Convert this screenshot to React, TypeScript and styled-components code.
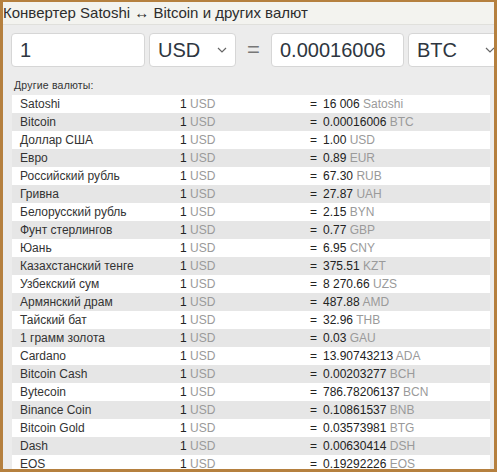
import * as React from 'react'
import styled, { createGlobalStyle } from 'styled-components'

const GlobalStyle = createGlobalStyle`
  html, body {
    margin: 0;
    padding: 0;
    background: #ffffff;
  }
`

const Frame = styled.div`
  box-sizing: border-box;
  width: 497px;
  height: 472px;
  overflow: hidden;
  border: 3px solid #b5803f;
  border-top-width: 2px;
  background: #ececec;
  font-family: 'Liberation Sans', Arial, sans-serif;
  color: #333333;
`

const Title = styled.div`
  height: 22px;
  line-height: 21px;
  font-size: 15px;
  color: #2d2d2d;
  background: #f3f3ef;
  border-bottom: 1px solid #e0e0dc;
  white-space: nowrap;
`

const Panel = styled.div`
  padding: 8px 0 0 8px;
`

const ConvertRow = styled.div`
  display: flex;
  align-items: center;
  width: 520px;
  gap: 4px;
`

const Field = styled.div<{ $width: number }>`
  box-sizing: border-box;
  flex: 0 0 ${p => p.$width}px;
  height: 34px;
  padding: 0 8px;
  display: flex;
  align-items: center;
  justify-content: space-between;
  background: #ffffff;
  border: 1px solid #d6d6d6;
  border-radius: 4px;
  font-size: 20px;
  color: #2e3640;
`

const Equals = styled.div`
  flex: 0 0 27px;
  text-align: center;
  font-size: 22px;
  color: #777777;
`

const Caption = styled.div`
  margin-top: 12px;
  padding-left: 3px;
  height: 16px;
  font-size: 10.5px;
  color: #333333;
  letter-spacing: 0.2px;
`

const Table = styled.div`
  width: 478px;
  margin-left: 1px;
`

const Row = styled.div<{ $odd: boolean }>`
  display: grid;
  grid-template-columns: 168px 130px 13px 1fr;
  height: 18px;
  line-height: 18px;
  font-size: 12px;
  background: ${p => (p.$odd ? '#e6e6e6' : '#ffffff')};
  white-space: nowrap;
`

const Name = styled.span`
  padding-left: 8px;
  color: #333333;
`

const Num = styled.span`
  color: #222222;
`

const Code = styled.span`
  color: #9a9a9a;
`

const Chevron = () => (
  <svg width='10' height='6' viewBox='0 0 10 6'>
    <path d='M1 1l4 4 4-4' fill='none' stroke='#666' strokeWidth='1.2' />
  </svg>
)

const rows: [string, string, string][] = [
  ['Satoshi', '16 006', 'Satoshi'],
  ['Bitcoin', '0.00016006', 'BTC'],
  ['Доллар США', '1.00', 'USD'],
  ['Евро', '0.89', 'EUR'],
  ['Российский рубль', '67.30', 'RUB'],
  ['Гривна', '27.87', 'UAH'],
  ['Белорусский рубль', '2.15', 'BYN'],
  ['Фунт стерлингов', '0.77', 'GBP'],
  ['Юань', '6.95', 'CNY'],
  ['Казахстанский тенге', '375.51', 'KZT'],
  ['Узбекский сум', '8 270.66', 'UZS'],
  ['Армянский драм', '487.88', 'AMD'],
  ['Тайский бат', '32.96', 'THB'],
  ['1 грамм золота', '0.03', 'GAU'],
  ['Cardano', '13.90743213', 'ADA'],
  ['Bitcoin Cash', '0.00203277', 'BCH'],
  ['Bytecoin', '786.78206137', 'BCN'],
  ['Binance Coin', '0.10861537', 'BNB'],
  ['Bitcoin Gold', '0.03573981', 'BTG'],
  ['Dash', '0.00630414', 'DSH'],
  ['EOS', '0.19292226', 'EOS'],
]

export default function App() {
  return (
    <>
      <GlobalStyle />
      <Frame>
        <Title>Конвертер Satoshi ↔ Bitcoin и других валют</Title>
        <Panel>
          <ConvertRow>
            <Field $width={134}>1</Field>
            <Field $width={87}>
              USD
              <Chevron />
            </Field>
            <Equals>=</Equals>
            <Field $width={133}>0.00016006</Field>
            <Field $width={96}>
              BTC
              <Chevron />
            </Field>
          </ConvertRow>
          <Caption>Другие валюты:</Caption>
          <Table>
            {rows.map(([name, value, code], i) => (
              <Row key={name} $odd={i % 2 === 1}>
                <Name>{name}</Name>
                <span>
                  <Num>1</Num> <Code>USD</Code>
                </span>
                <Num>=</Num>
                <span>
                  <Num>{value}</Num> <Code>{code}</Code>
                </span>
              </Row>
            ))}
          </Table>
        </Panel>
      </Frame>
    </>
  )
}
